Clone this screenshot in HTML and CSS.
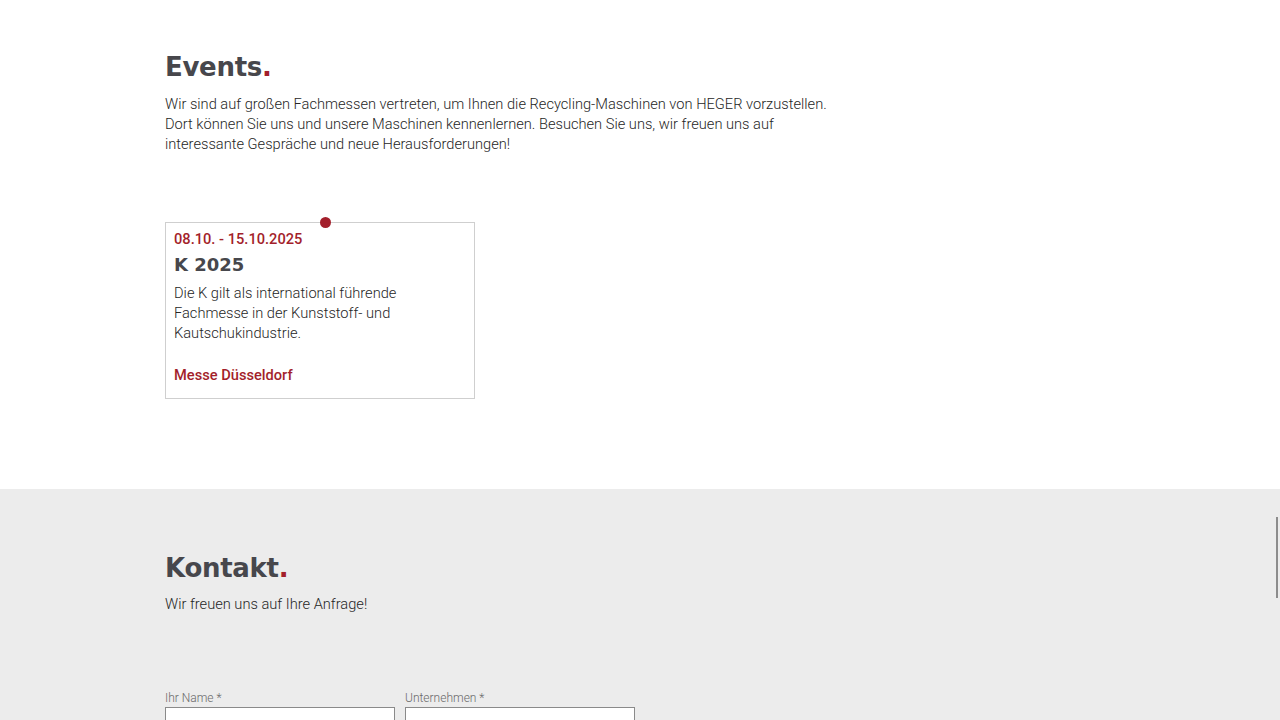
FILE: index.html
```html
<!DOCTYPE html>
<html lang="de">
<head>
    <meta charset="UTF-8">
    <title>Events - HEGER</title>
    <link rel="stylesheet" href="styles.css">
</head>
<body>

    <section class="events">
        <div class="container">
            <h2 class="section-title">Events<span class="dot">.</span></h2>
            <p class="intro">Wir sind auf großen Fachmessen vertreten, um Ihnen die Recycling-Maschinen von HEGER vorzustellen.<br>
            Dort können Sie uns und unsere Maschinen kennenlernen. Besuchen Sie uns, wir freuen uns auf<br>
            interessante Gespräche und neue Herausforderungen!</p>

            <div class="event-list">
                <div class="event-card">
                    <span class="marker"></span>
                    <div class="event-date">08.10. - 15.10.2025</div>
                    <h3 class="event-name">K 2025</h3>
                    <p class="event-text">Die K gilt als international führende Fachmesse in der Kunststoff- und Kautschukindustrie.</p>
                    <div class="event-place">Messe Düsseldorf</div>
                </div>
            </div>
        </div>
    </section>

    <section class="contact">
        <div class="container">
            <h2 class="section-title">Kontakt<span class="dot">.</span></h2>
            <p class="intro">Wir freuen uns auf Ihre Anfrage!</p>

            <form class="contact-form">
                <div class="field">
                    <label for="name">Ihr Name *</label>
                    <input type="text" id="name" name="name">
                </div>
                <div class="field">
                    <label for="company">Unternehmen *</label>
                    <input type="text" id="company" name="company">
                </div>
            </form>
        </div>
        <div class="scroll-hint"></div>
    </section>

</body>
</html>
```

FILE: styles.css
```css
body {
    margin: 0;
    font-family: Roboto, Arial, sans-serif;
    font-weight: 300;
    color: #262626;
    background-color: #fff;
}
.container {
    width: 950px;
    margin-left: 165px;
}
.section-title {
    margin: 0;
    font-family: "DejaVu Sans", Arial, sans-serif;
    font-weight: 700;
    font-size: 26px;
    line-height: 34px;
    letter-spacing: -0.3px;
    color: #47474c;
}
.dot {
    color: #a31f2b;
}
.intro {
    margin: 10px 0 0;
    font-size: 14.65px;
    line-height: 20px;
}
.events {
    padding: 50px 0 90px;
}
.event-list {
    margin-top: 68px;
    display: flex;
}
.event-card {
    position: relative;
    width: 292px;
    padding: 6px 8px 13px;
    border: 1px solid #cfcfcf;
}
.marker {
    position: absolute;
    top: -6px;
    left: 154px;
    width: 11px;
    height: 11px;
    border-radius: 50%;
    background-color: #a31f2b;
}
.event-date {
    font-size: 14.65px;
    line-height: 20px;
    font-weight: 500;
    color: #a31f2b;
}
.event-name {
    margin: 4px 0 0;
    font-family: "DejaVu Sans", Arial, sans-serif;
    font-weight: 700;
    font-size: 18px;
    line-height: 24px;
    color: #47474c;
}
.event-text {
    margin: 6px 0 0;
    font-size: 14.65px;
    line-height: 20px;
    width: 240px;
}
.event-place {
    margin-top: 22px;
    font-size: 14.65px;
    line-height: 20px;
    font-weight: 500;
    color: #a31f2b;
}
.contact {
    position: relative;
    background-color: #ececec;
    padding: 62px 0 40px;
    min-height: 300px;
}
.contact .intro {
    margin-top: 9px;
}
.contact-form {
    margin-top: 76px;
    display: flex;
    gap: 10px;
}
.field {
    display: flex;
    flex-direction: column;
    width: 230px;
}
.field label {
    font-size: 12px;
    line-height: 16px;
    color: #6a6a6a;
    margin-bottom: 1px;
}
.field input {
    height: 34px;
    border: 1px solid #8a8a8a;
    background-color: #fff;
    padding: 0 8px;
}
.scroll-hint {
    position: absolute;
    top: 28px;
    right: 2px;
    width: 2px;
    height: 81px;
    background-color: #8c8c8c;
}
```
